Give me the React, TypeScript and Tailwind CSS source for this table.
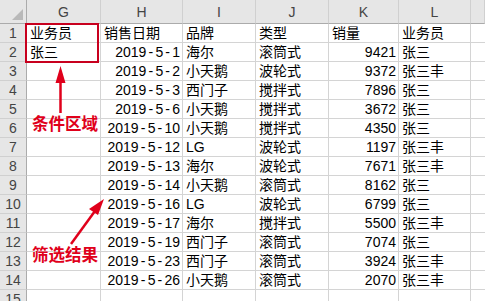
import React from 'react';

const cols = ['G', 'H', 'I', 'J', 'K', 'L', ''];

// 业务员, 销售日期, 品牌, 类型, 销量, 业务员
const rows: string[][] = [
  ['业务员', '销售日期', '品牌', '类型', '销量', '业务员'],
  ['张三', '2019-5-1', '海尔', '滚筒式', '9421', '张三'],
  ['', '2019-5-2', '小天鹅', '波轮式', '9372', '张三丰'],
  ['', '2019-5-3', '西门子', '搅拌式', '7896', '张三'],
  ['', '2019-5-6', '小天鹅', '搅拌式', '3672', '张三'],
  ['', '2019-5-10', '小天鹅', '搅拌式', '4350', '张三'],
  ['', '2019-5-12', 'LG', '波轮式', '1197', '张三丰'],
  ['', '2019-5-13', '海尔', '波轮式', '7671', '张三丰'],
  ['', '2019-5-14', '小天鹅', '滚筒式', '8162', '张三'],
  ['', '2019-5-16', 'LG', '波轮式', '6799', '张三'],
  ['', '2019-5-17', '海尔', '搅拌式', '5500', '张三丰'],
  ['', '2019-5-19', '西门子', '滚筒式', '7074', '张三'],
  ['', '2019-5-23', '西门子', '滚筒式', '3924', '张三丰'],
  ['', '2019-5-26', '小天鹅', '滚筒式', '2070', '张三丰'],
  ['', '', '', '', '', ''],
];

const font = { fontFamily: '"Liberation Sans", "Noto Sans CJK SC", sans-serif' };

function isNum(v: string) {
  return /^[0-9-]+$/.test(v) && v.length > 0;
}

// Excel 的连字符比较宽，单独放一格
function CellText({ value }: { value: string }) {
  if (!value.includes('-')) return <>{value}</>;
  const parts = value.split('-');
  return (
    <>
      {parts.map((p, i) => (
        <React.Fragment key={i}>
          {i > 0 && <span className="inline-block w-[9px] text-center">-</span>}
          {p}
        </React.Fragment>
      ))}
    </>
  );
}

export default function App() {
  return (
    <div className="relative w-[485px] h-[301px] overflow-hidden bg-white text-black" style={font}>
      <div className="grid grid-cols-[27px_74px_82px_73px_73px_70px_72px_1fr] grid-rows-[24px_repeat(15,19px)]">
        {/* 表头 */}
        <div className="relative bg-[#e6e6e6] border-r border-b border-[#ababab]">
          <div className="absolute right-[3px] bottom-[3px] w-0 h-0 border-l-[11px] border-l-transparent border-b-[11px] border-b-[#b9b9b9]" />
        </div>
        {cols.map((c, i) => (
          <div
            key={i}
            className="bg-[#e6e6e6] border-r border-b border-r-[#d0d0d0] border-b-[#ababab] flex items-center justify-center text-[14px] text-[#444] pt-[2px]"
          >
            {c}
          </div>
        ))}

        {rows.map((r, ri) => (
          <React.Fragment key={ri}>
            <div className="bg-[#e6e6e6] border-r border-b border-r-[#ababab] border-b-[#d0d0d0] flex items-center justify-center text-[14px] text-[#444]">
              {ri + 1}
            </div>
            {r.map((v, ci) => (
              <div
                key={ci}
                className={`border-r border-b border-[#d4d4d4] flex items-center whitespace-nowrap overflow-hidden text-[14px] leading-none ${
                  isNum(v) ? 'justify-end pr-[2px]' : 'justify-start pl-[3px]'
                }`}
              >
                <CellText value={v} />
              </div>
            ))}
            <div className="border-b border-[#d4d4d4]" />
          </React.Fragment>
        ))}
      </div>

      {/* 条件区域框 */}
      <div className="absolute left-[25px] top-[23px] w-[74px] h-[40px] border-2 border-[#c8001e]" />

      {/* 箭头 */}
      <svg className="absolute left-0 top-0" width="485" height="301">
        <line x1="60.5" y1="113" x2="60.5" y2="80" stroke="#e0001b" strokeWidth="2.5" />
        <polygon points="60.5,66 55.5,83 65.5,83" fill="#e0001b" />
        <line x1="71" y1="244" x2="95" y2="211" stroke="#e0001b" strokeWidth="2.5" />
        <polygon points="104,199 89,209 98,215" fill="#e0001b" />
      </svg>

      <div className="absolute left-[32px] top-[115px] text-[16.5px] font-bold text-[#e0001b] leading-none" style={{ fontFamily: '"Noto Sans CJK SC", sans-serif' }}>
        条件区域
      </div>
      <div className="absolute left-[32px] top-[246px] text-[16.5px] font-bold text-[#e0001b] leading-none" style={{ fontFamily: '"Noto Sans CJK SC", sans-serif' }}>
        筛选结果
      </div>
    </div>
  );
}
